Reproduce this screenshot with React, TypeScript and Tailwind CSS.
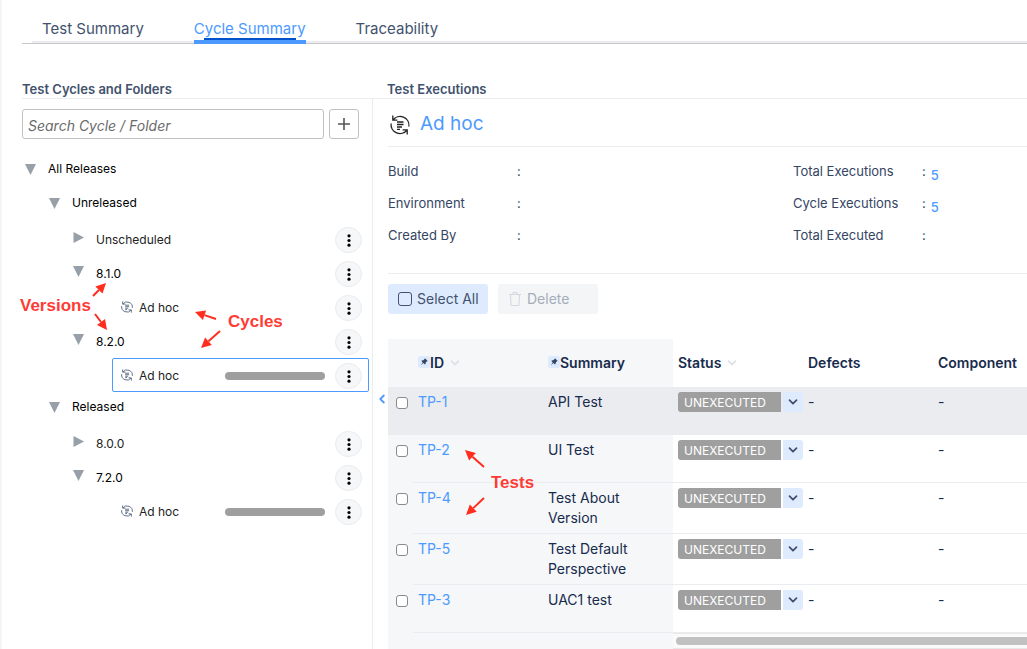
import { Fragment } from "react";

function CycleIcon({ className, weight }: { className: string; weight: number }) {
  return (
    <svg viewBox="0 0 20 20" fill="none" stroke="currentColor" strokeWidth={weight} className={className} aria-hidden="true">
      <path d="M2.800.6v4.600h4.600M3 5A8.900 8.900 0 0 1 18.900 11.500" />
      <path d="M17.200 19.400v-4.600h-4.600M17 15A8.900 8.900 0 0 1 1.100 8.500" />
      <path d="M7 7h6.500M7 9.500h6.500M7 12h5M7 14.300h3" />
    </svg>
  );
}

function Chevron({ className }: { className: string }) {
  return (
    <svg viewBox="0 0 10 10" fill="none" stroke="currentColor" strokeWidth="1.800" strokeLinecap="round" strokeLinejoin="round" className={className} aria-hidden="true">
      <path d="M1.500 3.200 5 6.700l3.500-3.500" />
    </svg>
  );
}

function Pin() {
  return (
    <svg viewBox="0 0 12 12" className="mb-0.5 h-3 w-3 shrink-0 rounded-xs bg-[#deebff] text-[#344563]" aria-hidden="true">
      <path d="M7 2.300 9.700 5l-.7.300-1.200 1.200-.3 1.500-.5.400L5.300 6.900 2.800 9.400l1.900-3L3.400 5l.4-.5 1.500-.3 1.300-1.300z" fill="currentColor" />
    </svg>
  );
}

type Node = {
  label: string;
  level: 0 | 1 | 2 | 3;
  open?: boolean;
  menu?: boolean;
  bar?: boolean;
  selected?: boolean;
};

const nodes: Node[] = [
  { label: "All Releases", level: 0, open: true },
  { label: "Unreleased", level: 1, open: true },
  { label: "Unscheduled", level: 2, open: false, menu: true },
  { label: "8.1.0", level: 2, open: true, menu: true },
  { label: "Ad hoc", level: 3, menu: true },
  { label: "8.2.0", level: 2, open: true, menu: true },
  { label: "Ad hoc", level: 3, menu: true, bar: true, selected: true },
  { label: "Released", level: 1, open: true },
  { label: "8.0.0", level: 2, open: false, menu: true },
  { label: "7.2.0", level: 2, open: true, menu: true },
  { label: "Ad hoc", level: 3, menu: true, bar: true },
];

const indent = ["ml-0", "ml-6", "ml-12", "ml-[90px]"];

function TreeRow({ node }: { node: Node }) {
  const leaf = node.level === 3;
  return (
    <li
      className={`flex h-[34px] items-center rounded-xs border pr-[6px] text-xs ${indent[node.level]} ${
        node.selected ? "border-[#4c9aff]" : "border-transparent"
      } ${node.level < 2 ? "pb-1" : ""}`}
    >
      {leaf ? (
        <CycleIcon weight={1.6} className="ml-2 mr-1.5 h-3 w-3 text-[#5e6c84]" />
      ) : (
        <button
          type="button"
          aria-label={`Toggle ${node.label}`}
          className={`ml-0.5 mr-3 flex h-3 w-[11px] items-center ${node.level === 2 ? "mb-1" : ""}`}
        >
          <svg viewBox="0 0 11 11" className="h-[11px] w-[11px] fill-[#97a0a8]">
            <path d={node.open ? "M0 0h11L5.500 11z" : "M.5 0v11L11 5.500z"} />
          </svg>
        </button>
      )}
      <span className={`grow ${node.level < 2 ? "" : "pt-0.5"} ${node.open ? "text-black" : "text-[#222]"}`}>{node.label}</span>
      {node.bar && <span className="mr-2.5 mt-0.5 h-2 w-[100px] rounded-full bg-[#9f9f9f]" />}
      {node.menu && (
        <button
          type="button"
          aria-label={`${node.label} actions`}
          className="mt-0.5 flex h-[26px] w-[27px] items-center justify-center rounded-full border border-[#ebecf0] bg-[#f6f7f9]"
        >
          <svg viewBox="0 0 4 14" className="h-[13px] w-1 fill-black">
            <circle cx="2" cy="2" r="1.700" />
            <circle cx="2" cy="7" r="1.700" />
            <circle cx="2" cy="12" r="1.700" />
          </svg>
        </button>
      )}
    </li>
  );
}

const info = [
  ["Build", "Total Executions", "5"],
  ["Environment", "Cycle Executions", "5"],
  ["Created By", "Total Executed", ""],
];

const tests = [
  { id: "TP-1", summary: "API Test" },
  { id: "TP-2", summary: "UI Test" },
  { id: "TP-4", summary: "Test About Version" },
  { id: "TP-5", summary: "Test Default Perspective" },
  { id: "TP-3", summary: "UAC1 test" },
];

function TestTable() {
  return (
    <table className="w-full min-w-[675px] table-fixed border-separate border-spacing-0 text-left text-sm text-[#172b4d]">
      <colgroup>
        <col className="w-[25px]" />
        <col className="w-[130px]" />
        <col className="w-[130px]" />
        <col className="w-[130px]" />
        <col className="w-[130px]" />
        <col />
      </colgroup>
      <thead>
        <tr className="h-12">
          <th className="bg-[#f6f7f9]" aria-label="Select" />
          <th className="bg-[#f6f7f9] px-[5px] font-semibold">
            <span className="flex items-center">
              <Pin />
              ID
              <Chevron className="ml-1.5 h-2.5 w-2.5 text-[#dfe1e6]" />
            </span>
          </th>
          <th className="bg-[#f6f7f9] px-[5px] font-semibold">
            <span className="flex items-center">
              <Pin />
              Summary
            </span>
          </th>
          <th className="px-[5px] font-semibold">
            <span className="flex items-center">
              Status
              <Chevron className="ml-1.5 h-2.5 w-2.5 text-[#dfe1e6]" />
            </span>
          </th>
          <th className="px-[5px] font-semibold">Defects</th>
          <th className="px-[5px] font-semibold">Component</th>
        </tr>
      </thead>
      <tbody>
        {tests.map((t, i) => {
          const frozen = i === 0 ? "bg-[#ebecf0]" : "bg-[#f6f7f9]";
          const free = i === 0 ? "bg-[#ebecf0]" : "";
          const cell = "border-b border-[#ebecf0] py-[5px] pl-[5px]";
          return (
            <tr key={t.id} className="h-12 align-top leading-5">
              <td className={`pl-2 pt-2.5 ${frozen}`}>
                <input
                  type="checkbox"
                  aria-label={`Select ${t.id}`}
                  className="block h-3 w-3 appearance-none rounded-[3px] border border-[#8a8a8a] bg-white"
                />
              </td>
              <td className={`${cell} ${frozen}`}>
                <a href="#" className="text-[#4c9aff]">{t.id}</a>
              </td>
              <td className={`${cell} pr-8 ${frozen}`}>{t.summary}</td>
              <td className={`${cell} ${free}`}>
                <div className="flex gap-0.5">
                  <span className="h-5 w-[103px] shrink-0 rounded-l-[3px] bg-[#9f9f9f] pl-1.5 text-xs leading-[21px] text-white">UNEXECUTED</span>
                  <button type="button" aria-label={`Change status of ${t.id}`} className="flex h-5 w-5 shrink-0 items-center justify-center rounded-r-[3px] bg-[#deebff] text-[#42526e]">
                    <Chevron className="h-2.5 w-2.5" />
                  </button>
                </div>
              </td>
              <td className={`${cell} ${free}`}>-</td>
              <td className={`${cell} ${free}`}>-</td>
            </tr>
          );
        })}
      </tbody>
    </table>
  );
}

function Arrow({ x1, y1, x2, y2 }: { x1: number; y1: number; x2: number; y2: number }) {
  const len = Math.hypot(x2 - x1, y2 - y1);
  const ux = (x2 - x1) / len;
  const uy = (y2 - y1) / len;
  const bx = x2 - ux * 10;
  const by = y2 - uy * 10;
  return (
    <g>
      <line x1={x1} y1={y1} x2={bx} y2={by} stroke="#ff2d1e" strokeWidth="2" />
      <polygon points={`${x2},${y2} ${bx - uy * 5},${by + ux * 5} ${bx + uy * 5},${by - ux * 5}`} fill="#ff2d1e" />
    </g>
  );
}

function Annotations() {
  const label = "absolute text-[17px] leading-5 font-bold text-[#ff3b36]";
  return (
    <div className="pointer-events-none absolute inset-y-0 -left-0.5 right-0 overflow-hidden font-['Liberation_Sans',sans-serif]">
      <svg className="absolute left-0 top-0 h-[649px] w-[560px]" aria-hidden="true">
        <Arrow x1={93} y1={296} x2={106} y2={283} />
        <Arrow x1={95} y1={314} x2={107} y2={330} />
        <Arrow x1={216} y1={319} x2={195} y2={312} />
        <Arrow x1={220} y1={331} x2={201} y2={348} />
        <Arrow x1={484} y1={467} x2={465} y2={450} />
        <Arrow x1={484} y1={498} x2={466} y2={515} />
      </svg>
      <span className={`${label} left-5 top-[296px]`}>Versions</span>
      <span className={`${label} left-[228px] top-[312px]`}>Cycles</span>
      <span className={`${label} left-[491px] top-[473px]`}>Tests</span>
    </div>
  );
}

export default function App() {
  return (
    <div className="relative flex min-h-screen flex-col overflow-hidden border-l-2 border-[#f4f5f7] bg-white pl-5 font-[Inter,sans-serif] text-[#42526e]">
      <nav className="relative flex h-11 items-end gap-[50px] border-b border-[#c8c8c8] pl-5 text-[15px]">
        <span className="absolute bottom-0 left-2.5 right-0 h-0.5 bg-[#ebecf0]" />
        <a href="#" className="relative h-[26px] leading-6">Test Summary</a>
        <a href="#" aria-current="page" className="relative -mb-px h-[27px] border-b-4 border-[#4c9aff] leading-6 text-[#4c9aff]">
          Cycle Summary
          <span className="absolute bottom-0 left-2.5 right-2.5 h-0.5 bg-[#0052cc]" />
        </a>
        <a href="#" className="relative h-[26px] leading-6">Traceability</a>
      </nav>

      <div className="mt-[37px] flex border-b border-[#ebecf0] text-[13px] font-semibold leading-[17px]">
        <h2 className="w-[365px] shrink-0">Test Cycles and Folders</h2>
        <h2>Test Executions</h2>
      </div>

      <main className="flex grow">
        <aside className="w-[351px] shrink-0 border-r border-[#ebecf0] pr-[3px] pt-2.5">
          <div className="mb-[15px] flex gap-[5px] pr-2.5">
            <input
              type="text"
              aria-label="Search Cycle / Folder"
              placeholder="Search Cycle / Folder"
              className="h-[30px] w-0 grow rounded-[3px] border border-[#c1c1c1] px-[5px] pt-0.5 text-sm italic placeholder:text-[#6b6b6b]"
            />
            <button type="button" aria-label="Add cycle" className="flex h-[30px] w-[30px] items-center justify-center rounded-[3px] border border-[#c1c1c1] text-[#555]">
              <svg viewBox="0 0 12 12" className="h-3 w-3" stroke="currentColor" strokeWidth="1.600"><path d="M6 0v12M0 6h12" /></svg>
            </button>
          </div>
          <ul>
            {nodes.map((n, i) => (
              <TreeRow key={i} node={n} />
            ))}
          </ul>
        </aside>

        <section className="flex min-w-0 grow">
          <div className="w-[15px] shrink-0 pt-[294px]">
            <button type="button" aria-label="Collapse panel" className="ml-1 flex h-3 w-2.5 items-center justify-center text-[#4c9aff]">
              <Chevron className="h-2.5 w-2.5 rotate-90" />
            </button>
          </div>
          <div className="flex min-w-0 grow flex-col">
            <header className="flex h-12 items-center gap-2.5 border-b border-[#ebecf0] pl-0.5 pt-1 text-[19px] text-[#4c9aff]">
              <CycleIcon weight={1.3} className="h-5 w-5 text-[#222]" />
              <h1>Ad hoc</h1>
            </header>
            <dl className="grid grid-cols-[129px_276px_129px_1fr] border-b border-[#ebecf0] pb-[22px] pt-2 text-[13px] leading-8 text-[#344563]">
              {info.map(([left, right, value]) => (
                <Fragment key={left}>
                  <dt>{left}</dt>
                  <dd>:</dd>
                  <dt>{right}</dt>
                  <dd className="flex gap-[5px]">
                    :{value && <a href="#" className="mt-1 h-7 font-medium text-[#4c9aff]">{value}</a>}
                  </dd>
                </Fragment>
              ))}
            </dl>
            <div className="mb-[25px] mt-2.5 flex gap-2.5 text-sm">
              <button type="button" className="flex h-[30px] w-[100px] items-center gap-[5px] rounded-[3px] bg-[#deebff] pl-2.5 text-[#42526e]">
                <span className="h-3.5 w-3.5 shrink-0 rounded-[3px] border border-[#42526e]" />
                <span className="whitespace-nowrap">Select All</span>
              </button>
              <button type="button" disabled className="flex h-[30px] w-[100px] items-center gap-[5px] rounded-[3px] bg-[#f4f5f7] pl-2.5 text-[#a5adba]">
                <svg viewBox="0 0 14 14" className="h-3.5 w-3.5" fill="none" stroke="#d3d7de"><path d="M1 2.500h12M5 2.500v-2h4v2M2.500 2.500l.5 11h8l.5-11" /></svg>
                Delete
              </button>
            </div>
            <div className="relative grow overflow-hidden">
              <TestTable />
              <div className="flex h-4">
                <span className="w-[285px] shrink-0 bg-[#f6f7f9]" />
                <span className="flex grow items-center border-y border-[#e8e8e8] bg-[#fafafa] pl-[3px]">
                  <span className="h-2 grow rounded-l-full bg-[#c1c1c1]" />
                </span>
              </div>
            </div>
          </div>
        </section>
      </main>
      <Annotations />
    </div>
  );
}
